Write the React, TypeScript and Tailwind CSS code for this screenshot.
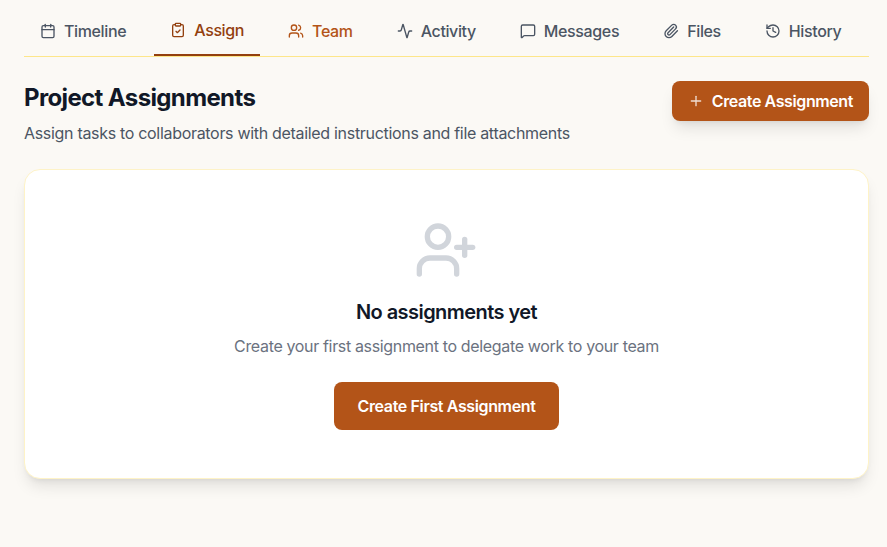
import { Calendar, ClipboardCheck, Users, Activity, MessageSquare, Paperclip, History, Plus, UserPlus } from "lucide-react";

const tabs = [
  { label: "Timeline", Icon: Calendar, cls: "text-[#4b5563]" },
  { label: "Assign", Icon: ClipboardCheck, cls: "text-[#93400f] border-[#93400f]", active: true },
  { label: "Team", Icon: Users, cls: "text-[#b35418]" },
  { label: "Activity", Icon: Activity, cls: "text-[#4b5563]" },
  { label: "Messages", Icon: MessageSquare, cls: "text-[#4b5563]" },
  { label: "Files", Icon: Paperclip, cls: "text-[#4b5563]" },
  { label: "History", Icon: History, cls: "text-[#4b5563]" },
];

export default function App() {
  return (
    <div className="h-[547px] overflow-hidden bg-[#fbf9f5] pl-6 pr-[18px] font-['Inter',sans-serif]">
      <nav className="flex h-[57px] gap-3 border-b border-[#fde68a] tracking-[-0.37px]">
        {tabs.map(({ label, Icon, cls, active }) => (
          <button
            key={label}
            className={`flex h-[56px] items-center gap-2 border-b-2 px-4 pt-[7px] text-base font-medium ${active ? "" : "border-transparent"} ${cls}`}
          >
            <span className={`flex items-center gap-2 ${active ? "-translate-y-px" : ""}`}>
              <Icon size={16} />
              {label}
            </span>
          </button>
        ))}
      </nav>

      <div className="mt-6 flex items-start justify-between">
        <div className="pt-[1px]">
          <h2 className="text-2xl font-bold leading-8 tracking-[-0.63px] text-[#111827]">Project Assignments</h2>
          <p className="mt-[7px] text-base leading-6 tracking-[-0.31px] text-[#4b5563]">
            Assign tasks to collaborators with detailed instructions and file attachments
          </p>
        </div>
        <button className="flex h-10 items-center gap-2 rounded-lg bg-[#b35418] px-4 text-base font-semibold tracking-[-0.4px] text-white shadow-lg">
          <Plus size={16} className="opacity-80" />
          Create Assignment
        </button>
      </div>

      <div className="mt-[24px] flex h-[310px] flex-col items-center rounded-2xl border border-[#fef3c7] bg-white pt-[48px] shadow-lg">
        <UserPlus size={64} className="mr-[1px] text-[#d1d5db]" />
        <h3 className="mt-4 text-xl font-semibold leading-7 tracking-[-0.55px] text-[#111827]">No assignments yet</h3>
        <p className="mt-2 text-base leading-6 tracking-[-0.345px] text-[#6b7280]">
          Create your first assignment to delegate work to your team
        </p>
        <button className="mt-6 h-12 rounded-lg bg-[#b35418] px-6 text-base font-semibold tracking-[-0.37px] text-white">
          Create First Assignment
        </button>
      </div>
    </div>
  );
}
